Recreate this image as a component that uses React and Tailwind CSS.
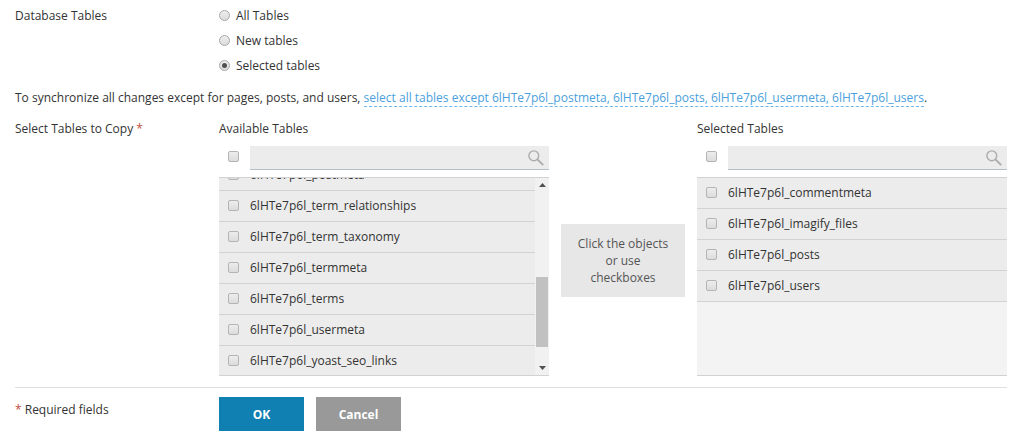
import { useEffect, useRef } from "react";

const availableTables = [
  "6lHTe7p6l_postmeta",
  "6lHTe7p6l_term_relationships",
  "6lHTe7p6l_term_taxonomy",
  "6lHTe7p6l_termmeta",
  "6lHTe7p6l_terms",
  "6lHTe7p6l_usermeta",
  "6lHTe7p6l_yoast_seo_links",
];

const selectedTables = [
  "6lHTe7p6l_commentmeta",
  "6lHTe7p6l_imagify_files",
  "6lHTe7p6l_posts",
  "6lHTe7p6l_users",
];

const Checkbox = (props) => (
  <input
    type="checkbox"
    className="m-0 block size-[11px] shrink-0 appearance-none rounded-xs border border-[#b4b4b4] bg-linear-to-b from-[#ededed] to-[#dcdcdc] checked:from-[#888] checked:to-[#777]"
    {...props}
  />
);

const Radio = ({ label, ...props }) => (
  <label className="flex h-5 items-center gap-[6px]">
    <input
      type="radio"
      name="tables"
      className="m-0 flex size-[11px] shrink-0 appearance-none items-center justify-center rounded-full border border-[#a8a8a8] bg-linear-to-b from-[#ededed] to-[#dcdcdc] checked:before:size-[5px] checked:before:rounded-full checked:before:bg-[#505050]"
      {...props}
    />
    {label}
  </label>
);

const SearchIcon = () => (
  <svg width="16" height="16" viewBox="0 0 16 16" fill="none" stroke="#acacac">
    <circle cx="5.8" cy="5.8" r="4.9" strokeWidth="1.4" />
    <path d="M9.4 9.4L15.2 15.2" strokeWidth="1.9" />
  </svg>
);

const SearchBar = ({ name }) => (
  <div className="mt-2 flex items-start gap-[11px] pl-[9px]">
    <div className="pt-[5px]">
      <Checkbox aria-label={`All ${name}`} />
    </div>
    <div className="flex h-6 min-w-0 flex-1 items-center border-b border-[#b3bfc9] bg-[#ececec] pr-[5px]">
      <input
        type="text"
        aria-label={`Search ${name}`}
        className="h-full min-w-0 flex-1 bg-transparent px-2 outline-none"
      />
      <button type="button" aria-label="Search">
        <SearchIcon />
      </button>
    </div>
  </div>
);

const TableRow = ({ name }) => (
  <li className="border-b border-[#d2d2d2] bg-[#ececec]">
    <label className="flex h-[30px] items-center gap-[11px] pb-[2px] pl-[9px]">
      <Checkbox />
      {name}
    </label>
  </li>
);

const ScrollBar = () => (
  <div className="flex w-[14px] shrink-0 flex-col items-center bg-[#f1f1f1] py-[5px]">
    <svg width="7" height="4" viewBox="0 0 7 4" fill="#505050">
      <path d="M0 4L3.5 0L7 4Z" />
    </svg>
    <div className="flex w-full flex-1 flex-col justify-end px-px pb-[19px]">
      <div className="h-[70px] bg-[#c1c1c1]" />
    </div>
    <svg width="7" height="4" viewBox="0 0 7 4" fill="#505050">
      <path d="M0 0L3.5 4L7 0Z" />
    </svg>
  </div>
);

const TableList = ({ title, tables, scroll }) => {
  const listRef = useRef(null);

  useEffect(() => {
    if (scroll) listRef.current.scrollTop = scroll;
  }, [scroll]);

  return (
    <div className="min-w-0">
      <h2 className="h-5">{title}</h2>
      <SearchBar name={title} />
      <div className="mt-[7px] flex h-[199px] border-y border-[#d2d2d2] bg-[#f3f3f3]">
        <ul ref={listRef} className="min-w-0 flex-1 overflow-y-auto [scrollbar-width:none]">
          {tables.map((name) => (
            <TableRow key={name} name={name} />
          ))}
        </ul>
        {scroll && <ScrollBar />}
      </div>
    </div>
  );
};

const App = () => {
  return (
    <form
      className="bg-white pt-[5px] pr-[17px] pb-[10px] pl-[15px] font-['Open_Sans',sans-serif] text-xs leading-[21px] text-[#333]"
      onSubmit={(e) => e.preventDefault()}
    >
      <div className="grid grid-cols-[204px_minmax(0,1fr)]">
        <div>Database Tables</div>
        <div className="flex flex-col items-start gap-[5px]">
          <Radio label="All Tables" />
          <Radio label="New tables" />
          <Radio label="Selected tables" defaultChecked />
        </div>
      </div>

      <p className="mt-3">
        To synchronize all changes except for pages, posts, and users,{" "}
        <a href="#" className="border-b border-dashed border-[#6cb8ee] text-[#4a9fdc]">
          select all tables except 6lHTe7p6l_postmeta, 6lHTe7p6l_posts, 6lHTe7p6l_usermeta, 6lHTe7p6l_users
        </a>
        .
      </p>

      <div className="mt-[10px] grid grid-cols-[204px_minmax(0,1fr)]">
        <div>
          Select Tables to Copy <span className="text-[#c0503c]">*</span>
        </div>
        <div className="grid grid-cols-[33fr_124px_31fr] gap-3">
          <TableList title="Available Tables" tables={availableTables} scroll={18} />
          <div className="flex items-center pt-[27px]">
            <p className="w-full bg-[#e7e7e7] px-3 py-[11px] text-center leading-[17px] text-[#555]">
              Click the objects or use checkboxes
            </p>
          </div>
          <TableList title="Selected Tables" tables={selectedTables} />
        </div>
      </div>

      <div className="mt-[11px] grid grid-cols-[204px_minmax(0,1fr)] border-t border-[#dfdfdf] pt-[9px]">
        <div className="pt-[2px]">
          <span className="text-[#c0503c]">*</span> Required fields
        </div>
        <div className="flex gap-3">
          <button type="submit" className="h-[34px] w-[85px] bg-[#107fb2] font-bold text-white">
            OK
          </button>
          <button type="button" className="h-[34px] w-[85px] bg-[#999] font-bold text-white">
            Cancel
          </button>
        </div>
      </div>
    </form>
  );
};

export default App;
